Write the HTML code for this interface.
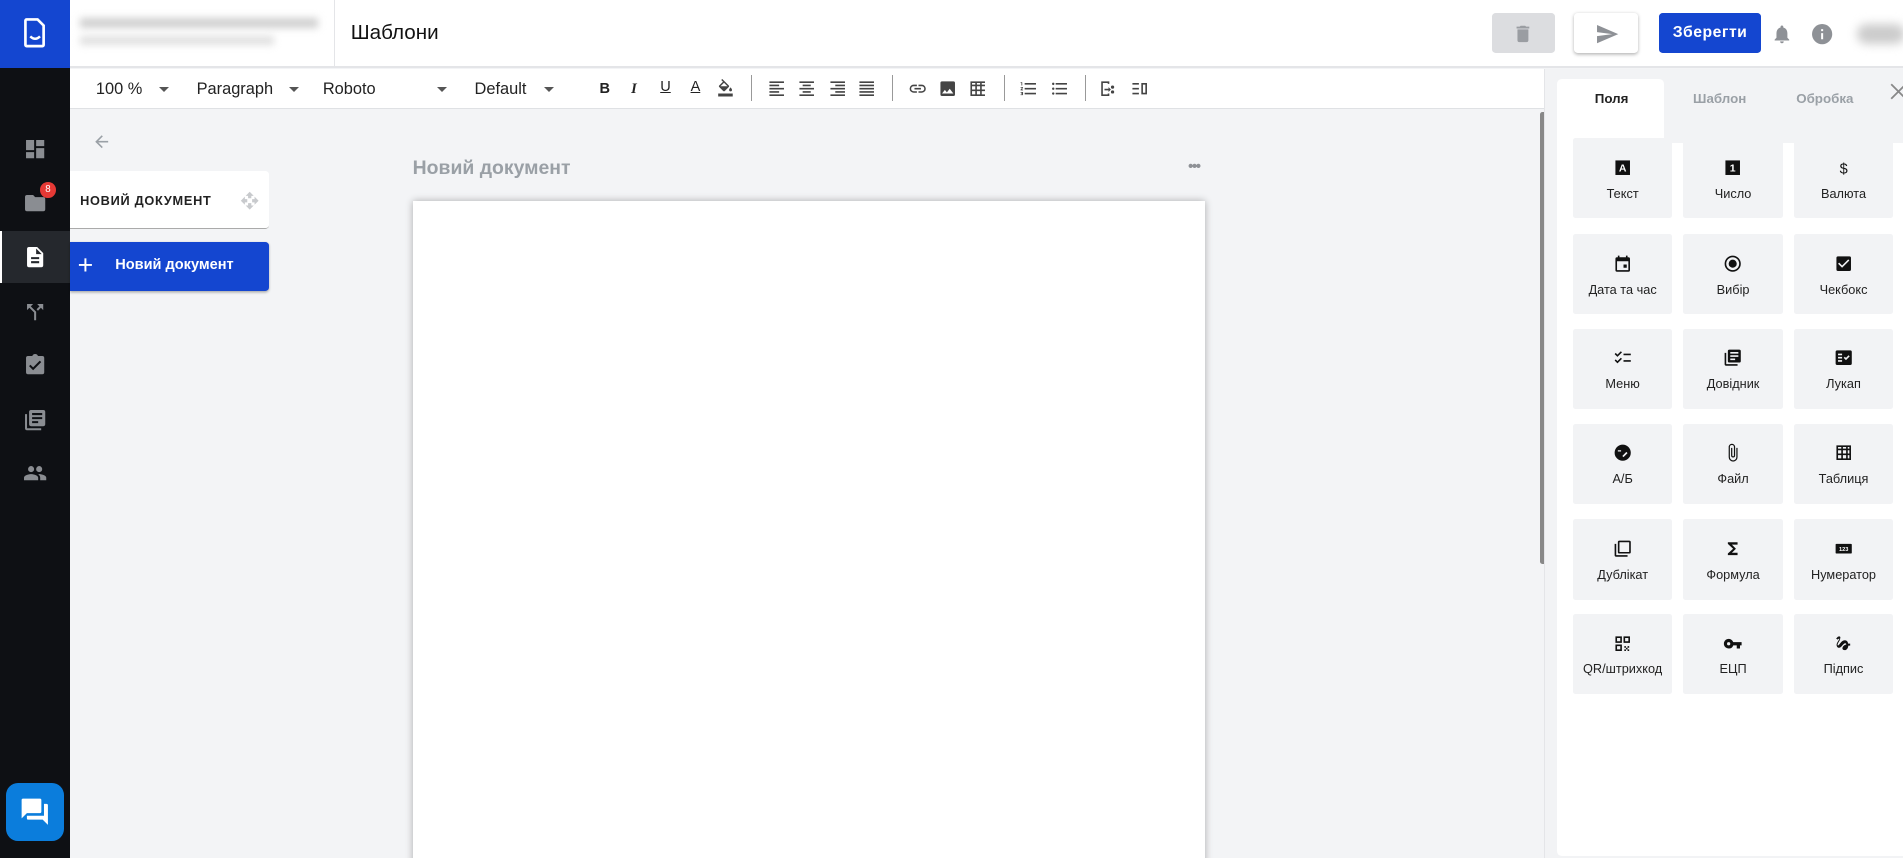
<!DOCTYPE html>
<html><head><meta charset="utf-8"><style>
*{box-sizing:border-box;margin:0;padding:0}
html,body{width:1903px;height:858px;overflow:hidden;background:#f3f4f6}
#w{zoom:1.21365;width:1568px;height:707px;position:relative;font-family:"Liberation Sans","Noto Sans CJK SC",sans-serif;overflow:hidden;background:#f3f4f6}
.a{position:absolute}
.side{left:0;top:0;width:58px;height:707px;background:#0e1014}
.ic{position:absolute;left:19px;width:20px;height:20px}
.tb{position:absolute;top:57px;left:58px;width:1214px;height:33px;background:#fff;border-bottom:1px solid #dfe1e4}
.tt{position:absolute;top:9px;font-size:13.5px;color:#222}
.car{position:absolute;top:15px;width:0;height:0;border-left:4.5px solid transparent;border-right:4.5px solid transparent;border-top:4.5px solid #555}
.ti{position:absolute;top:8px;width:16px;height:16px}
.dv{position:absolute;top:5px;width:1px;height:21px;background:#999}
.tile{position:absolute;width:82px;height:66px;background:#f2f3f5;border-radius:2px;text-align:center}
.tile svg{position:absolute;left:33px;top:16px;width:16px;height:16px}
.tile span{position:absolute;left:0;right:0;top:39px;font-size:10.5px;color:#222}
</style></head><body><div id="w">
<!-- sidebar -->
<div class="a side"></div>
<div class="a" style="left:0;top:0;width:58px;height:56px;background:#1446d0"></div>
<svg class="a" style="left:19px;top:14px" width="20" height="26" viewBox="0 0 20 26"><path d="M3 2h9l5 5v16a1 1 0 0 1-1 1H3a1 1 0 0 1-1-1V3a1 1 0 0 1 1-1z" fill="none" stroke="#fff" stroke-width="2.2"/><path d="M6 16q4 4 8 0" fill="none" stroke="#fff" stroke-width="2"/></svg>
<svg class="ic" style="top:113px" viewBox="0 0 24 24" fill="#8a8d92"><path d="M3 13h8V3H3zm0 8h8v-6H3zm10 0h8V11h-8zm0-18v6h8V3z"/></svg>
<svg class="ic" style="top:157px" viewBox="0 0 24 24" fill="#8a8d92"><path d="M10 4H4a2 2 0 0 0-2 2v12a2 2 0 0 0 2 2h16a2 2 0 0 0 2-2V8a2 2 0 0 0-2-2h-8z"/></svg>
<div class="a" style="left:33px;top:150px;width:13px;height:13px;border-radius:50%;background:#e53935;color:#fff;font-size:8px;text-align:center;line-height:13px">8</div>
<div class="a" style="left:0;top:190px;width:58px;height:43px;background:#25282d;border-left:2px solid #fff"></div>
<svg class="ic" style="top:202px" viewBox="0 0 24 24" fill="#fff"><path d="M14 2H6a2 2 0 0 0-2 2v16a2 2 0 0 0 2 2h12a2 2 0 0 0 2-2V8zm2 16H8v-2h8zm0-4H8v-2h8zm-3-5V3.5L18.5 9z"/></svg>
<svg class="ic" style="top:247px" viewBox="0 0 24 24" fill="#8a8d92"><path d="M14 4l2.3 2.3-2.9 2.9 1.4 1.4 2.9-2.9L20 10V4zM10 4H4v6l2.3-2.3 4.7 4.7V20h2v-8.4l-5.3-5.3z"/></svg>
<svg class="ic" style="top:291px" viewBox="0 0 24 24" fill="#8a8d92"><path d="M19 3h-4.2A3 3 0 0 0 12 1a3 3 0 0 0-2.8 2H5a2 2 0 0 0-2 2v14a2 2 0 0 0 2 2h14a2 2 0 0 0 2-2V5a2 2 0 0 0-2-2zm-9 14l-4-4 1.4-1.4 2.6 2.6 6.6-6.6L18 9z"/></svg>
<svg class="ic" style="top:336px" viewBox="0 0 24 24" fill="#8a8d92"><path d="M4 6H2v14a2 2 0 0 0 2 2h14v-2H4zm16-4H8a2 2 0 0 0-2 2v12a2 2 0 0 0 2 2h12a2 2 0 0 0 2-2V4a2 2 0 0 0-2-2zm-1 9h-10V9h10zm-4 4H9v-2h6zm4-8H9V5h10z"/></svg>
<svg class="ic" style="top:380px" viewBox="0 0 24 24" fill="#8a8d92"><path d="M16 11a3 3 0 1 0-3-3 3 3 0 0 0 3 3zm-8 0a3 3 0 1 0-3-3 3 3 0 0 0 3 3zm0 2c-2.3 0-7 1.2-7 3.5V19h14v-2.5C15 14.2 10.3 13 8 13zm8 0c-.3 0-.6 0-1 .1 1.2.8 2 2 2 3.4V19h6v-2.5c0-2.3-4.7-3.5-7-3.5z"/></svg>
<div class="a" style="left:5px;top:645px;width:48px;height:48px;border-radius:10px;background:#0b7ddc"></div>
<svg class="a" style="left:16px;top:656px" width="26" height="26" viewBox="0 0 24 24" fill="#fff"><path d="M21 6h-2v9H6v2c0 .6.4 1 1 1h11l4 4V7c0-.6-.4-1-1-1zm-4 6V3c0-.6-.4-1-1-1H3c-.6 0-1 .4-1 1v14l4-4h10c.6 0 1-.4 1-1z"/></svg>
<!-- header -->
<div class="a" style="left:58px;top:0;width:1510px;height:56px;background:#fff;border-bottom:2px solid #e4e5e8"></div>
<div class="a" style="left:66px;top:15px;width:196px;height:8px;background:#d0d0d0;filter:blur(3px)"></div>
<div class="a" style="left:66px;top:30px;width:160px;height:7px;background:#e0e0e0;filter:blur(3px)"></div>
<div class="a" style="left:275px;top:0;width:1px;height:56px;background:#e4e5e8"></div>
<div class="a" style="left:289px;top:17px;font-size:17px;color:#111">Шаблони</div>
<div class="a" style="left:1229px;top:11px;width:52px;height:33px;background:#dcdde0;border-radius:3px"></div>
<svg class="a" style="left:1246px;top:19px" width="18" height="18" viewBox="0 0 24 24" fill="#9a9da2"><path d="M6 19a2 2 0 0 0 2 2h8a2 2 0 0 0 2-2V7H6zM19 4h-3.5l-1-1h-5l-1 1H5v2h14z"/></svg>
<div class="a" style="left:1297px;top:11px;width:53px;height:33px;background:#fff;border-radius:3px;box-shadow:0 1px 3px rgba(0,0,0,.3)"></div>
<svg class="a" style="left:1314px;top:18px" width="20" height="20" viewBox="0 0 24 24" fill="#8e9196"><path d="M2 21l21-9L2 3v7l15 2-15 2z"/></svg>
<div class="a" style="left:1367px;top:11px;width:84px;height:33px;background:#1446d0;border-radius:3px;color:#fff;font-weight:bold;font-size:13px;text-align:center;line-height:33px;letter-spacing:.4px">Зберегти</div>
<svg class="a" style="left:1459px;top:18px" width="18" height="20" viewBox="0 0 24 24" fill="#8e9196"><path d="M12 22a2 2 0 0 0 2-2h-4a2 2 0 0 0 2 2zm6-6v-5c0-3.1-1.6-5.6-4.5-6.3V4a1.5 1.5 0 0 0-3 0v.7C7.6 5.4 6 7.9 6 11v5l-2 2v1h16v-1z"/></svg>
<svg class="a" style="left:1491px;top:18px" width="20" height="20" viewBox="0 0 24 24" fill="#8e9196"><path d="M12 2a10 10 0 1 0 0 20 10 10 0 0 0 0-20zm1 15h-2v-6h2zm0-8h-2V7h2z"/></svg>
<div class="a" style="left:1530px;top:20px;width:40px;height:16px;background:#ccc;border-radius:8px;filter:blur(4px)"></div>
<!-- toolbar -->
<div class="tb">
<div class="tt" style="left:21px">100 %</div><div class="car" style="left:73px"></div>
<div class="tt" style="left:104px">Paragraph</div><div class="car" style="left:180px"></div>
<div class="tt" style="left:208px">Roboto</div><div class="car" style="left:302px"></div>
<div class="tt" style="left:333px">Default</div><div class="car" style="left:390px"></div>
<div class="tt" style="left:436px;font-weight:bold;font-size:12px;top:10px">B</div>
<div class="tt" style="left:462px;font-style:italic;font-weight:bold;font-size:12px;top:10px;font-family:'Liberation Serif',serif">I</div>
<div class="tt" style="left:486px;font-size:12px;top:8px;text-decoration:underline">U</div>
<div class="tt" style="left:511px;font-size:12px;top:8px;text-decoration:underline">A</div>
<svg class="ti" style="left:532px" viewBox="0 0 24 24" fill="#444"><path d="M16.6 8.9L7.6 0 6.2 1.4l2.4 2.4-5.2 5.1c-.6.6-.6 1.5 0 2.1l5.5 5.5c.3.3.7.4 1.1.4s.8-.1 1.1-.4l5.5-5.5c.6-.6.6-1.5 0-2.1zM5.2 10L10 5.2 14.8 10zM19 11.5s-2 2.2-2 3.5a2 2 0 0 0 4 0c0-1.3-2-3.5-2-3.5zM2 20h20v4H2z" transform="scale(.9) translate(1,0)"/></svg>
<div class="dv" style="left:561px"></div>
<svg class="ti" style="left:574px" viewBox="0 0 24 24" fill="#444"><path d="M3 3h18v2H3zm0 4h12v2H3zm0 4h18v2H3zm0 4h12v2H3zm0 4h18v2H3z"/></svg>
<svg class="ti" style="left:599px" viewBox="0 0 24 24" fill="#444"><path d="M3 3h18v2H3zm4 4h10v2H7zm-4 4h18v2H3zm4 4h10v2H7zm-4 4h18v2H3z"/></svg>
<svg class="ti" style="left:624px" viewBox="0 0 24 24" fill="#444"><path d="M3 3h18v2H3zm6 4h12v2H9zm-6 4h18v2H3zm6 4h12v2H9zm-6 4h18v2H3z"/></svg>
<svg class="ti" style="left:648px" viewBox="0 0 24 24" fill="#444"><path d="M3 3h18v2H3zm0 4h18v2H3zm0 4h18v2H3zm0 4h18v2H3zm0 4h18v2H3z"/></svg>
<div class="dv" style="left:677px"></div>
<svg class="ti" style="left:690px" viewBox="0 0 24 24" fill="#444"><path d="M3.9 12A3.1 3.1 0 0 1 7 8.9h4V7H7a5 5 0 0 0 0 10h4v-1.9H7A3.1 3.1 0 0 1 3.9 12zM8 13h8v-2H8zm9-6h-4v1.9h4a3.1 3.1 0 0 1 0 6.2h-4V17h4a5 5 0 0 0 0-10z"/></svg>
<svg class="ti" style="left:715px" viewBox="0 0 24 24" fill="#444"><path d="M21 19V5a2 2 0 0 0-2-2H5a2 2 0 0 0-2 2v14a2 2 0 0 0 2 2h14a2 2 0 0 0 2-2zM8.5 13.5l2.5 3 3.5-4.5 4.5 6H5z"/></svg>
<svg class="ti" style="left:740px" viewBox="0 0 24 24" fill="#444"><path d="M3 3v18h18V3zm6 16H5v-4h4zm0-6H5V9h4zm0-6H5V5h4zm6 12h-4v-4h4zm0-6h-4V9h4zm0-6h-4V5h4zm4 12h-2v-4h4v4zm0-6h-2V9h4v4zm0-6h-2V5h4v2z"/></svg>
<div class="dv" style="left:769px"></div>
<svg class="ti" style="left:782px" viewBox="0 0 24 24" fill="#444"><path d="M2 17h2v.5H3v1h1v.5H2v1h3v-4H2zm1-9h1V4H2v1h1zm-1 3h1.8L2 13.1v.9h3v-1H3.2L5 10.9V10H2zm5-6v2h14V5zm0 14h14v-2H7zm0-6h14v-2H7z"/></svg>
<svg class="ti" style="left:807px" viewBox="0 0 24 24" fill="#444"><path d="M4 10.5a1.5 1.5 0 1 0 0 3 1.5 1.5 0 0 0 0-3zm0-6a1.5 1.5 0 1 0 0 3 1.5 1.5 0 0 0 0-3zm0 12a1.5 1.5 0 1 0 0 3 1.5 1.5 0 0 0 0-3zM7 19h14v-2H7zm0-6h14v-2H7zm0-8v2h14V5z"/></svg>
<div class="dv" style="left:836px"></div>
<svg class="ti" style="left:847px" viewBox="0 0 24 24" fill="#444"><path d="M4 3h10v3h-2V5H6v14h6v-1h2v3H4zm9 7l3 3-3 3v-2H8v-2h5zm5-2a2 2 0 1 1 0 4 2 2 0 0 1 0-4zm0 6a2 2 0 1 1 0 4 2 2 0 0 1 0-4z"/></svg>
<svg class="ti" style="left:873px" viewBox="0 0 24 24" fill="#444"><path d="M3 5h8v2H3zm0 6h8v2H3zm0 6h8v2H3zm11-12h7v14h-7zm2 2v10h3V7z"/></svg>
</div>
<!-- scrollbar -->
<div class="a" style="left:1269px;top:92px;width:6px;height:373px;background:#888;border-radius:2px"></div>
<div class="a" style="left:1272px;top:57px;width:1px;height:650px;background:#e4e5e8"></div>
<!-- left nav -->
<svg class="a" style="left:76px;top:109px" width="16" height="16" viewBox="0 0 24 24" fill="#9aa0a6"><path d="M20 11H7.8l5.6-5.6L12 4l-8 8 8 8 1.4-1.4L7.8 13H20z"/></svg>
<div class="a" style="left:58px;top:141px;width:164px;height:48px;background:#fff;border-radius:0 3px 3px 0;border-bottom:1px solid #aaa"></div>
<div class="a" style="left:66px;top:159px;font-size:10.5px;font-weight:bold;color:#222;letter-spacing:.6px">НОВИЙ ДОКУМЕНТ</div>
<svg class="a" style="left:198px;top:157px" width="16" height="16" viewBox="0 0 24 24" fill="#c8cacd"><path d="M10 9h4V6h3l-5-5-5 5h3zm-1 1H6V7l-5 5 5 5v-3h3zm14 2l-5-5v3h-3v4h3v3zm-9 3h-4v3H7l5 5 5-5h-3z"/></svg>
<div class="a" style="left:58px;top:199px;width:164px;height:41px;background:#1446d0;border-radius:0 3px 3px 0;box-shadow:0 1px 2px rgba(0,0,0,.3)"></div>
<div class="a" style="left:64px;top:206px;color:#fff;font-size:22px;line-height:26px">+</div>
<div class="a" style="left:95px;top:212px;color:#fff;font-size:12px;font-weight:bold">Новий документ</div>
<!-- doc -->
<div class="a" style="left:340px;top:129px;font-size:16px;font-weight:bold;color:#9aa0a6">Новий документ</div>
<div class="a" style="left:979px;top:131px;font-size:12px;color:#8e9196;letter-spacing:-1px;font-weight:bold">•••</div>
<div class="a" style="left:340px;top:166px;width:653px;height:560px;background:#fff;box-shadow:0 0 6px rgba(0,0,0,.3)"></div>
<!-- right panel -->
<div class="a" style="left:1273px;top:57px;width:295px;height:650px;background:#f2f3f5"></div>
<div class="a" style="left:1283px;top:65px;width:88px;height:53px;background:#fff;border-radius:4px 4px 0 0"></div>
<div class="a" style="left:1283px;top:118px;width:290px;height:587px;background:#fff;border-radius:0 0 4px 4px"></div>
<div class="a" style="left:1314px;top:75px;font-size:11px;font-weight:bold;color:#222">Поля</div>
<div class="a" style="left:1395px;top:75px;font-size:11px;font-weight:bold;color:#9aa0a6">Шаблон</div>
<div class="a" style="left:1480px;top:75px;font-size:11px;font-weight:bold;color:#9aa0a6">Обробка</div>
<svg class="a" style="left:1557px;top:68px" width="14" height="14" viewBox="0 0 14 14" stroke="#888" stroke-width="1.5"><path d="M1 1l12 12M13 1L1 13"/></svg>
<!-- tiles -->
<div class="tile" style="left:1296px;top:114px"><svg viewBox="0 0 24 24"><rect x="3" y="3" width="18" height="18" fill="#111"/><text x="12" y="17" font-size="13" fill="#fff" text-anchor="middle" font-weight="bold" font-family="Liberation Sans">A</text></svg><span>Текст</span></div>
<div class="tile" style="left:1387px;top:114px"><svg viewBox="0 0 24 24"><rect x="3" y="3" width="18" height="18" fill="#111"/><text x="12" y="17" font-size="13" fill="#fff" text-anchor="middle" font-weight="bold" font-family="Liberation Sans">1</text></svg><span>Число</span></div>
<div class="tile" style="left:1478px;top:114px"><svg viewBox="0 0 24 24"><text x="12" y="19" font-size="18" fill="#111" text-anchor="middle" font-family="Liberation Sans">$</text></svg><span>Валюта</span></div>
<div class="tile" style="left:1296px;top:193px"><svg viewBox="0 0 24 24" fill="#111"><path d="M19 4h-1V2h-2v2H8V2H6v2H5a2 2 0 0 0-2 2v14a2 2 0 0 0 2 2h14a2 2 0 0 0 2-2V6a2 2 0 0 0-2-2zm0 16H5V9h14zM13 13h4v4h-4z"/></svg><span>Дата та час</span></div>
<div class="tile" style="left:1387px;top:193px"><svg viewBox="0 0 24 24" fill="#111"><path d="M12 7a5 5 0 1 0 0 10 5 5 0 0 0 0-10zm0-5a10 10 0 1 0 0 20 10 10 0 0 0 0-20zm0 18a8 8 0 1 1 0-16 8 8 0 0 1 0 16z"/></svg><span>Вибір</span></div>
<div class="tile" style="left:1478px;top:193px"><svg viewBox="0 0 24 24" fill="#111"><path d="M19 3H5a2 2 0 0 0-2 2v14a2 2 0 0 0 2 2h14a2 2 0 0 0 2-2V5a2 2 0 0 0-2-2zm-9 14l-5-5 1.4-1.4 3.6 3.6 7.6-7.6L19 8z"/></svg><span>Чекбокс</span></div>
<div class="tile" style="left:1296px;top:271px"><svg viewBox="0 0 24 24" fill="#111"><path d="M13 7h9v2h-9zm0 8h9v2h-9zM5.5 11L2 7.5l1.4-1.4 2.1 2.1 4.2-4.2 1.4 1.4zm0 8L2 15.5l1.4-1.4 2.1 2.1 4.2-4.2 1.4 1.4z"/></svg><span>Меню</span></div>
<div class="tile" style="left:1387px;top:271px"><svg viewBox="0 0 24 24" fill="#111"><path d="M4 6H2v14a2 2 0 0 0 2 2h14v-2H4zm16-4H8a2 2 0 0 0-2 2v12a2 2 0 0 0 2 2h12a2 2 0 0 0 2-2V4a2 2 0 0 0-2-2zm-1 9H9V9h10zm-4 4H9v-2h6zm4-8H9V5h10z"/></svg><span>Довідник</span></div>
<div class="tile" style="left:1478px;top:271px"><svg viewBox="0 0 24 24" fill="#111"><path d="M20 3H4a2 2 0 0 0-2 2v14a2 2 0 0 0 2 2h16a2 2 0 0 0 2-2V5a2 2 0 0 0-2-2zM10 17H5v-2h5zm0-4H5v-2h5zm0-4H5V7h5zm4.8 6L12 12.2l1.4-1.4 1.4 1.4 3.2-3.2 1.4 1.4z"/></svg><span>Лукап</span></div>
<div class="tile" style="left:1296px;top:349px"><svg viewBox="0 0 24 24" fill="#111"><path d="M12 2a10 10 0 1 0 0 20 10 10 0 0 0 0-20zM6 9h4v1.5H6zm7 8.5L11.5 16l5-5 1.5 1.5z"/></svg><span>А/Б</span></div>
<div class="tile" style="left:1387px;top:349px"><svg viewBox="0 0 24 24" fill="#111"><path d="M16.5 6v11.5a4 4 0 0 1-8 0V5a2.5 2.5 0 0 1 5 0v10.5a1 1 0 0 1-2 0V6H10v9.5a2.5 2.5 0 0 0 5 0V5a4 4 0 0 0-8 0v12.5a5.5 5.5 0 0 0 11 0V6z"/></svg><span>Файл</span></div>
<div class="tile" style="left:1478px;top:349px"><svg viewBox="0 0 24 24" fill="#111"><path d="M3 3v18h18V3zm6 16H5v-4h4zm0-6H5V9h4zm0-6H5V5h4zm6 12h-4v-4h4zm0-6h-4V9h4zm0-6h-4V5h4zm4 12h-2v-4h2zm0-6h-2V9h2zm0-6h-2V5h2z"/></svg><span>Таблиця</span></div>
<div class="tile" style="left:1296px;top:428px"><svg viewBox="0 0 24 24" fill="#111"><path d="M4 6H2v14a2 2 0 0 0 2 2h14v-2H4zm16-4H8a2 2 0 0 0-2 2v12a2 2 0 0 0 2 2h12a2 2 0 0 0 2-2V4a2 2 0 0 0-2-2zm0 14H8V4h12z"/></svg><span>Дублікат</span></div>
<div class="tile" style="left:1387px;top:428px"><svg viewBox="0 0 24 24" fill="#111"><path d="M18 4H6v2l6.5 6L6 18v2h12v-3h-7l5-5-5-5h7z"/></svg><span>Формула</span></div>
<div class="tile" style="left:1478px;top:428px"><svg viewBox="0 0 24 24"><rect x="2" y="6" width="20" height="12" rx="1" fill="#111"/><text x="12" y="15" font-size="7" fill="#fff" text-anchor="middle" font-weight="bold" font-family="Liberation Sans">123</text></svg><span>Нумератор</span></div>
<div class="tile" style="left:1296px;top:506px"><svg viewBox="0 0 24 24" fill="#111"><path d="M3 11h8V3H3zm2-6h4v4H5zM13 3v8h8V3zm6 6h-4V5h4zM3 21h8v-8H3zm2-6h4v4H5zm9 0h2v2h-2zm2 2h2v2h-2zm2-2h2v2h-2zm-4 4h2v2h-2zm4 0h2v2h-2z"/></svg><span>QR/штрихкод</span></div>
<div class="tile" style="left:1387px;top:506px"><svg viewBox="0 0 24 24" fill="#111"><path d="M12.7 10A6 6 0 1 0 7 18a6 6 0 0 0 5.7-4H17v4h4v-4h2v-4zM7 14a2 2 0 1 1 0-4 2 2 0 0 1 0 4z"/></svg><span>ЕЦП</span></div>
<div class="tile" style="left:1478px;top:506px"><svg viewBox="0 0 24 24" fill="#111"><path d="M4.6 6.9C5.3 6.2 6 5.5 6.4 5.7c.5.2 0 1-.3 1.5-.3.4-2.9 3.9-2.9 6.3 0 1.3.5 2.3 1.3 3 .8.6 1.8.7 2.7.4 1-.3 1.9-1.300 2.9-2.5 1.1-1.3 2.5-3 3.6-3 1.4 0 1.4.9 1.5 1.6-3.4.6-4.8 3.3-4.8 4.8S11.7 20 13.3 20c1.5 0 4-1.2 4.4-5.6H20v-2.5h-2.5c-.2-1.6-1.1-4.2-4.1-4.2-2.3 0-4.2 1.9-5 2.9-.6.7-2.1 2.5-2.3 2.7-.3.3-.7.9-1.1.9-.4 0-.7-.8-.4-1.9.4-1.1 1.4-2.8 1.8-3.4.7-1.1 1.2-1.8 1.2-3.2C8.5 3.5 7.1 3 6.4 3 5.3 3 4.3 3.8 3.9 4.3c-.6.6-1.1 1.1-1.3 1.3z"/></svg><span>Підпис</span></div>
</div></body></html>
